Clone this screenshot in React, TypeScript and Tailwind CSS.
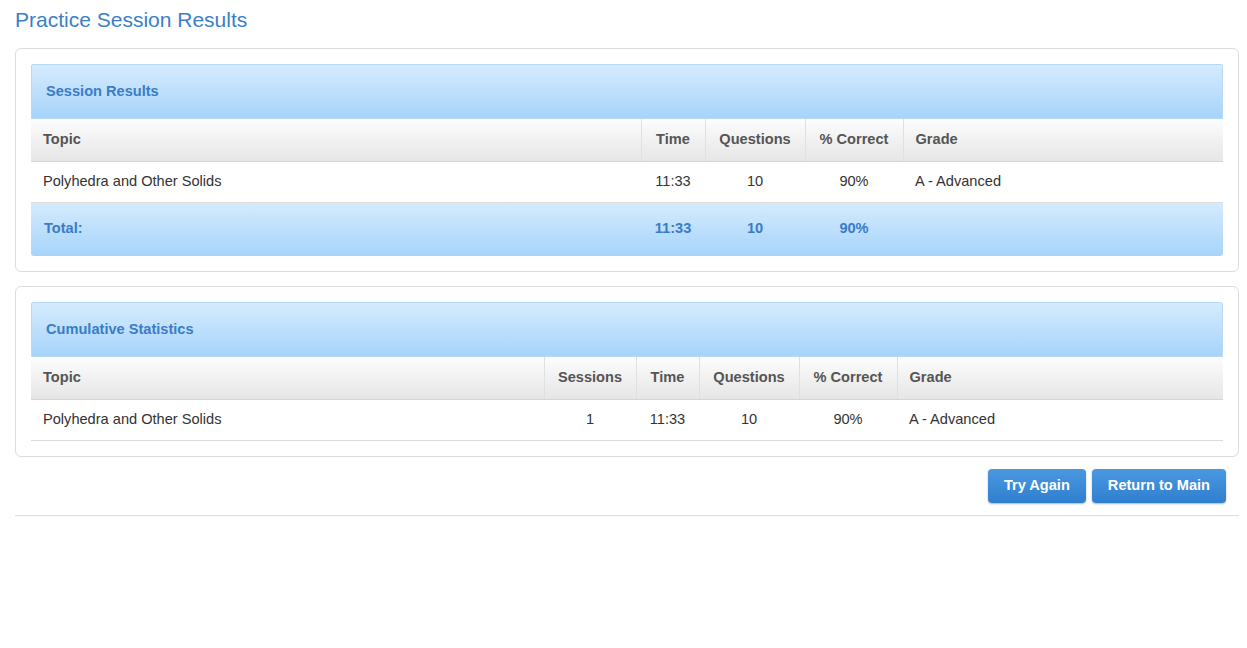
import React from 'react'

const font = { fontFamily: '"Liberation Sans", Arial, sans-serif' }

type Col = { label: string; w: string; align: 'left' | 'center' }

function ResultsTable({
  title,
  cols,
  row,
  total,
}: {
  title: string
  cols: Col[]
  row: string[]
  total?: string[]
}) {
  return (
    <div className="rounded-[6px] border border-[#dcdcdc] bg-white p-[15px]">
      <div className="h-[55px] flex items-center pl-[14px] rounded-t-[2px] border border-[#b7d9f7] bg-gradient-to-b from-[#d5ebfd] to-[#a6d4fb] text-[14.6px] font-bold text-[#3a7cc6]">
        {title}
      </div>
      <table className="w-full border-collapse table-fixed text-[14.6px]">
        <colgroup>
          {cols.map((c, i) => (
            <col key={i} className={c.w} />
          ))}
        </colgroup>
        <thead>
          <tr className="h-[42px] bg-gradient-to-b from-[#fdfdfd] via-[#f1f1f1] to-[#e6e6e6]">
            {cols.map((c, i) => (
              <th
                key={i}
                className={`font-bold text-[#555] px-[12px] border-b border-[#d4d4d4] ${
                  i > 0 ? 'border-l border-l-[#e0e0e0]' : ''
                } ${c.align === 'center' ? 'text-center' : 'text-left'}`}
              >
                {c.label}
              </th>
            ))}
          </tr>
        </thead>
        <tbody>
          <tr className="h-[41px] border-b border-[#dcdcdc]">
            {row.map((v, i) => (
              <td
                key={i}
                className={`text-[#333] px-[12px] ${cols[i].align === 'center' ? 'text-center' : 'text-left'}`}
              >
                {v}
              </td>
            ))}
          </tr>
          {total && (
            <tr className="h-[54px] bg-gradient-to-b from-[#d5ebfd] to-[#a6d4fb]">
              {total.map((v, i) => (
                <td
                  key={i}
                  className={`font-bold text-[#3a7cc6] px-[13px] ${
                    cols[i].align === 'center' ? 'text-center' : 'text-left'
                  } ${i === 0 ? 'rounded-bl-[3px]' : ''} ${i === total.length - 1 ? 'rounded-br-[3px]' : ''}`}
                >
                  {v}
                </td>
              ))}
            </tr>
          )}
        </tbody>
      </table>
    </div>
  )
}

export default function App() {
  return (
    <div className="min-h-[648px] bg-white pl-[15px] pr-[8px] pt-[8px]" style={font}>
      <h1 className="text-[21px] leading-[24px] text-[#3a80c9] mb-[16px]">Practice Session Results</h1>

      <div className="flex flex-col gap-[14px]">
        <ResultsTable
          title="Session Results"
          cols={[
            { label: 'Topic', w: 'w-[610px]', align: 'left' },
            { label: 'Time', w: 'w-[64px]', align: 'center' },
            { label: 'Questions', w: 'w-[100px]', align: 'center' },
            { label: '% Correct', w: 'w-[98px]', align: 'center' },
            { label: 'Grade', w: 'w-auto', align: 'left' },
          ]}
          row={['Polyhedra and Other Solids', '11:33', '10', '90%', 'A - Advanced']}
          total={['Total:', '11:33', '10', '90%', '']}
        />

        <ResultsTable
          title="Cumulative Statistics"
          cols={[
            { label: 'Topic', w: 'w-[513px]', align: 'left' },
            { label: 'Sessions', w: 'w-[92px]', align: 'center' },
            { label: 'Time', w: 'w-[63px]', align: 'center' },
            { label: 'Questions', w: 'w-[100px]', align: 'center' },
            { label: '% Correct', w: 'w-[98px]', align: 'center' },
            { label: 'Grade', w: 'w-auto', align: 'left' },
          ]}
          row={['Polyhedra and Other Solids', '1', '11:33', '10', '90%', 'A - Advanced']}
        />
      </div>

      <div className="flex justify-end gap-[6px] pr-[13px] pt-[12px] pb-[12px] border-b border-[#dcdcdc]">
        <button className="h-[34px] px-[16px] rounded-[4px] bg-gradient-to-b from-[#4a98e0] to-[#2f7fcf] text-white font-bold text-[14.6px] shadow-[0_1px_2px_rgba(0,0,0,0.3)]">
          Try Again
        </button>
        <button className="h-[34px] px-[16px] rounded-[4px] bg-gradient-to-b from-[#4a98e0] to-[#2f7fcf] text-white font-bold text-[14.6px] shadow-[0_1px_2px_rgba(0,0,0,0.3)]">
          Return to Main
        </button>
      </div>
    </div>
  )
}
